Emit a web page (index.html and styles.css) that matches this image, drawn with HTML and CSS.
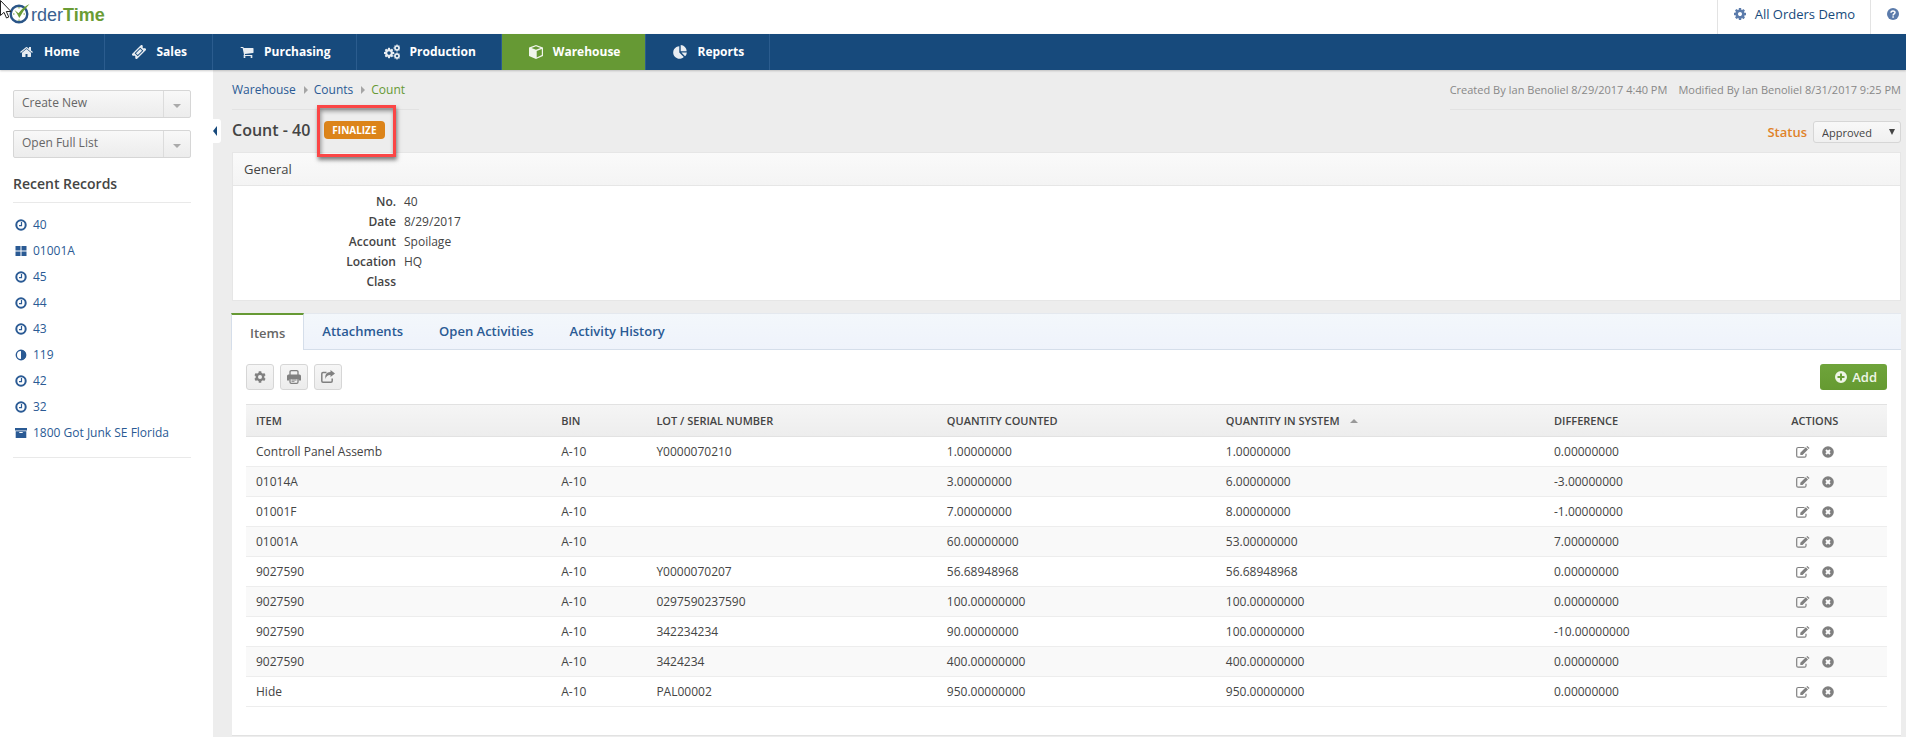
FILE: index.html
```html
<!DOCTYPE html>
<html lang="en">
<head>
  <meta charset="UTF-8">
  <title>OrderTime - Count 40</title>
  <link rel="stylesheet" href="styles.css">
</head>
<body>
  <!-- shared icons -->
  <svg class="sprite" aria-hidden="true">
    <symbol id="i-home" viewBox="0 0 1792 1792"><path d="M1408 992v480q0 26-19 45t-45 19h-384v-384h-256v384h-384q-26 0-45-19t-19-45v-480q0-1 .5-3t.5-3l575-474 575 474q1 2 1 6zm223-69l-62 74q-8 9-21 11h-3q-13 0-21-7l-692-577-692 577q-12 8-24 7-13-2-21-11l-62-74q-8-10-7-23.500t11-21.500l719-599q32-26 76-26t76 26l244 204v-195q0-14 9-23t23-9h192q14 0 23 9t9 23v408l219 182q10 8 11 21.500t-7 23.500z"/></symbol>
    <symbol id="i-ticket" viewBox="0 0 16 16"><g transform="rotate(-45 8 8)"><path fill-rule="evenodd" d="M0 4h16v2.500a1.500 1.500 0 0 0 0 3V12H0V9.500a1.500 1.500 0 0 0 0-3zM3.500 5.500v5h9v-5z"/><path d="M4.500 6.500h7v3h-7z"/></g></symbol>
    <symbol id="i-cart" viewBox="0 0 1792 1792"><path d="M704 1536q0 52-38 90t-90 38-90-38-38-90 38-90 90-38 90 38 38 90zm896 0q0 52-38 90t-90 38-90-38-38-90 38-90 90-38 90 38 38 90zm128-1088v512q0 24-16.500 42.500t-40.500 21.500l-1044 122q13 60 13 70 0 16-24 64h920q26 0 45 19t19 45-19 45-45 19h-1024q-26 0-45-19t-19-45q0-11 8-31.500t16-36 21.500-40 15.500-29.500l-177-823h-204q-26 0-45-19t-19-45 19-45 45-19h256q16 0 28.500 6.500t19.500 15.500 13 24.500 8 26 5.500 29.500 4.500 26h1201q26 0 45 19t19 45z"/></symbol>
    <symbol id="i-gear" viewBox="0 0 1792 1792"><path d="M1152 896q0-106-75-181t-181-75-181 75-75 181 75 181 181 75 181-75 75-181zm512-109v222q0 12-8 23t-20 13l-185 28q-19 54-39 91 35 50 107 138 10 12 10 25t-9 23q-27 37-99 108t-94 71q-12 0-26-9l-138-108q-44 23-91 38-16 136-29 186-7 28-36 28h-222q-14 0-24.500-8.500t-11.500-21.500l-28-184q-49-16-90-37l-141 107q-10 9-25 9-14 0-25-11-126-114-165-168-7-10-7-23 0-12 8-23 15-21 51-66.500t54-70.500q-27-50-41-99l-183-27q-13-2-21-12.500t-8-23.500v-222q0-12 8-23t19-13l186-28q14-46 39-92-40-57-107-138-10-12-10-24 0-10 9-23 26-36 98.500-107.500t94.500-71.500q13 0 26 10l138 107q44-23 91-38 16-136 29-186 7-28 36-28h222q14 0 24.500 8.500t11.500 21.500l28 184q49 16 90 37l142-107q9-9 24-9 13 0 25 10 129 119 165 170 7 8 7 22 0 12-8 23-15 21-51 66.500t-54 70.500q26 50 41 98l183 28q13 2 21 12.500t8 23.500z"/></symbol>
    <symbol id="i-gears" viewBox="0 0 16 16"><use href="#i-gear" x="-1" y="3" width="12" height="12"/><use href="#i-gear" x="9" y="0" width="8" height="8"/><use href="#i-gear" x="9" y="8" width="8" height="8"/></symbol>
    <symbol id="i-cog" viewBox="0 0 12 12"><circle cx="6" cy="6" r="3.200" fill="none" stroke="currentColor" stroke-width="2.400"/><path d="M4.700.3h2.600v2.200H4.700zM4.700 9.500h2.600v2.200H4.700z"/><path d="M4.700.3h2.600v2.200H4.700zM4.700 9.500h2.600v2.200H4.700z" transform="rotate(60 6 6)"/><path d="M4.700.3h2.600v2.200H4.700zM4.700 9.500h2.600v2.200H4.700z" transform="rotate(120 6 6)"/></symbol>
    <symbol id="i-box" viewBox="0 0 14 14"><path fill-rule="evenodd" d="M7 0l7 2.600v8.300L7 14 0 10.900V2.600zM7 1.300L2.500 3 7 4.700 11.500 3zM7.700 6v6.400l5.100-2.300V4z"/></symbol>
    <symbol id="i-pie" viewBox="0 0 14 14"><path d="M6.300 1.200v6.300l4.500 4.600A6.300 6.300 0 1 1 6.300 1.200z"/><path d="M7.700 0A6.200 6.200 0 0 1 13.700 6.200h-6zM8.400 7.500h5.500a6 6 0 0 1-1.900 3.800z"/></symbol>
    <symbol id="i-clock" viewBox="0 0 12 12"><circle cx="6" cy="6" r="4.700" fill="none" stroke="currentColor" stroke-width="2"/><path d="M6.500 3v3.700H4" fill="none" stroke="currentColor" stroke-width="1.200"/></symbol>
    <symbol id="i-grid" viewBox="0 0 12 12"><path d="M.5 1h5v4.500h-5zM6.500 1h5v4.500h-5zM.5 6.500h5V11h-5zM6.500 6.500h5V11h-5z"/></symbol>
    <symbol id="i-half" viewBox="0 0 12 12"><circle cx="6" cy="6" r="4.700" fill="none" stroke="currentColor" stroke-width="1.400"/><path d="M6 1a5 5 0 0 1 0 10z"/></symbol>
    <symbol id="i-archive" viewBox="0 0 12 12"><path fill-rule="evenodd" d="M0 1h12v2.500H0zM.7 4.300h10.600V11H.7zM4.300 5v1h3.400V5z"/></symbol>
    <symbol id="i-help" viewBox="0 0 12 12"><circle cx="6" cy="6" r="6"/><path d="M4 4.700C4 2.300 8 2.300 8 4.600 8 6 6.100 5.900 6.100 7.400M6.100 8.300v1.500" fill="none" stroke="#fff" stroke-width="1.500"/></symbol>
    <symbol id="i-print" viewBox="0 0 14 14"><path d="M3 5V2q0-1.300 1.300-1.300h5.400Q11 .7 11 2v3" fill="#f2f2f2" stroke="currentColor" stroke-width="1.300"/><path d="M1.500 4.500h11Q14 4.500 14 6v4.500h-2.500V9h-9v1.500H0V6q0-1.500 1.500-1.500z"/><path d="M3 8.500h8V12q0 1.300-1.300 1.300H4.300Q3 13.300 3 12z" fill="#f2f2f2" stroke="currentColor" stroke-width="1.300"/><path d="M4.500 9.600h5v1h-5zM4.500 11.300h3v.8h-3z"/></symbol>
    <symbol id="i-share" viewBox="0 0 14 14"><path d="M5.500 2.500H2Q.8 2.500.8 3.700V11q0 1.200 1.200 1.200h8q1.200 0 1.200-1.200V8.500" fill="none" stroke="currentColor" stroke-width="1.500"/><path d="M9.500 0L14 3.500 9.500 7V5Q5.500 4.800 4.500 9 3 2.300 9.500 2z"/></symbol>
    <symbol id="i-plus" viewBox="0 0 12 12"><path fill-rule="evenodd" d="M6 0a6 6 0 1 1 0 12A6 6 0 0 1 6 0zM5 2.500V5H2.500v2H5v2.500h2V7h2.500V5H7V2.500z"/></symbol>
    <symbol id="i-edit" viewBox="0 0 14 12"><path d="M8.500 1.500H2.200Q.7 1.500.7 3v6.700q0 1.500 1.500 1.500h6.300q1.500 0 1.500-1.500V7.800" fill="none" stroke="currentColor" stroke-width="1.200"/><path d="M4.300 9V6.800L9.800 1.300 12 3.500 6.500 9zM10.400.8l.9-.8 2.200 2.100-.8.900z"/></symbol>
    <symbol id="i-remove" viewBox="0 0 12 12"><circle cx="6" cy="6" r="5.800"/><path d="M4 4l4 4M8 4L4 8" stroke="#fff" stroke-width="1.900"/></symbol>
  </svg>

  <header class="topbar">
    <a class="logo" href="#">
      <svg class="logo-mark" viewBox="0 0 22 22"><circle cx="10" cy="12" r="8.300" fill="none" stroke="#2a5587" stroke-width="2.400"/><path d="M10 5v1.500M4 12h1.500M14.500 12H16M10 17.500V19" stroke="#6a9c35" stroke-width="1"/><path d="M5.500 8l4 3.200Q14 5 20.500 2 14.500 8 10.300 16 8.500 12 5.500 8z" fill="#6a9c35"/></svg>
      <span class="logo-order">rder</span><span class="logo-time">Time</span>
    </a>
    <div class="account">
      <a class="account-link" href="#"><svg class="icon icon-lg"><use href="#i-gear"/></svg>All Orders Demo</a>
      <a class="help-link" href="#" aria-label="Help"><svg class="icon"><use href="#i-help"/></svg></a>
    </div>
  </header>
  <svg class="cursor" viewBox="0 0 12 19" aria-hidden="true"><path d="M.5.500v15l3.500-3.200 2.500 5.700 2.300-1-2.500-5.500H11z" fill="#fff" stroke="#222"/></svg>

  <nav class="main-nav">
    <a href="#"><svg class="icon icon-lg"><use href="#i-home"/></svg>Home</a>
    <a href="#"><svg class="icon icon-lg"><use href="#i-ticket"/></svg>Sales</a>
    <a href="#"><svg class="icon icon-lg"><use href="#i-cart"/></svg>Purchasing</a>
    <a href="#"><svg class="icon icon-xl"><use href="#i-gears"/></svg>Production</a>
    <a href="#" class="active"><svg class="icon icon-lg"><use href="#i-box"/></svg>Warehouse</a>
    <a href="#"><svg class="icon icon-lg"><use href="#i-pie"/></svg>Reports</a>
  </nav>

  <div class="layout">
    <aside class="sidebar">
      <button type="button" class="drop-btn"><span>Create New</span><i class="caret"></i></button>
      <button type="button" class="drop-btn"><span>Open Full List</span><i class="caret"></i></button>
      <h2>Recent Records</h2>
      <ul class="recent">
        <li><a href="#"><svg class="icon"><use href="#i-clock"/></svg>40</a></li>
        <li><a href="#"><svg class="icon"><use href="#i-grid"/></svg>01001A</a></li>
        <li><a href="#"><svg class="icon"><use href="#i-clock"/></svg>45</a></li>
        <li><a href="#"><svg class="icon"><use href="#i-clock"/></svg>44</a></li>
        <li><a href="#"><svg class="icon"><use href="#i-clock"/></svg>43</a></li>
        <li><a href="#"><svg class="icon"><use href="#i-half"/></svg>119</a></li>
        <li><a href="#"><svg class="icon"><use href="#i-clock"/></svg>42</a></li>
        <li><a href="#"><svg class="icon"><use href="#i-clock"/></svg>32</a></li>
        <li><a href="#"><svg class="icon"><use href="#i-archive"/></svg>1800 Got Junk SE Florida</a></li>
      </ul>
      <button type="button" class="collapse" aria-label="Collapse sidebar"></button>
    </aside>

    <main class="content">
      <div class="crumb-row">
        <div class="crumbs">
          <a href="#">Warehouse</a><i class="sep"></i><a href="#">Counts</a><i class="sep"></i><span class="current">Count</span>
        </div>
        <div class="audit"><span>Created By Ian Benoliel 8/29/2017 4:40 PM</span><span>Modified By Ian Benoliel 8/31/2017 9:25 PM</span></div>
      </div>

      <div class="title-row">
        <h1>Count - 40</h1>
        <div class="finalize-wrap">
          <button type="button" class="finalize">FINALIZE</button>
          <div class="highlight"></div>
        </div>
        <div class="status">
          <label for="status">Status</label>
          <div class="select-wrap">
            <select id="status"><option>Approved</option></select>
          </div>
        </div>
      </div>

      <section class="card">
        <h3>General</h3>
        <dl class="fields">
          <dt>No.</dt><dd>40</dd>
          <dt>Date</dt><dd>8/29/2017</dd>
          <dt>Account</dt><dd>Spoilage</dd>
          <dt>Location</dt><dd>HQ</dd>
          <dt>Class</dt><dd></dd>
        </dl>
      </section>

      <section class="panel">
        <div class="tabs">
          <a href="#" class="active">Items</a>
          <a href="#">Attachments</a>
          <a href="#">Open Activities</a>
          <a href="#">Activity History</a>
        </div>
        <div class="panel-body">
          <div class="toolbar">
            <button type="button" class="tool" aria-label="Settings"><svg class="icon"><use href="#i-cog"/></svg></button>
            <button type="button" class="tool" aria-label="Print"><svg class="icon icon-lg"><use href="#i-print"/></svg></button>
            <button type="button" class="tool" aria-label="Export"><svg class="icon icon-lg"><use href="#i-share"/></svg></button>
            <button type="button" class="add"><svg class="icon"><use href="#i-plus"/></svg>Add</button>
          </div>
          <table class="items">
            <thead>
              <tr>
                <th class="c-item">ITEM</th>
                <th class="c-bin">BIN</th>
                <th class="c-lot">LOT / SERIAL NUMBER</th>
                <th class="c-counted">QUANTITY COUNTED</th>
                <th class="c-system">QUANTITY IN SYSTEM<i class="sort"></i></th>
                <th class="c-diff">DIFFERENCE</th>
                <th class="c-actions">ACTIONS</th>
              </tr>
            </thead>
            <tbody id="rows"></tbody>
          </table>
        </div>
      </section>
    </main>
  </div>

  <script>
    const items = [
      ["Controll Panel Assemb", "A-10", "Y0000070210", "1.00000000", "1.00000000", "0.00000000"],
      ["01014A", "A-10", "", "3.00000000", "6.00000000", "-3.00000000"],
      ["01001F", "A-10", "", "7.00000000", "8.00000000", "-1.00000000"],
      ["01001A", "A-10", "", "60.00000000", "53.00000000", "7.00000000"],
      ["9027590", "A-10", "Y0000070207", "56.68948968", "56.68948968", "0.00000000"],
      ["9027590", "A-10", "0297590237590", "100.00000000", "100.00000000", "0.00000000"],
      ["9027590", "A-10", "342234234", "90.00000000", "100.00000000", "-10.00000000"],
      ["9027590", "A-10", "3424234", "400.00000000", "400.00000000", "0.00000000"],
      ["Hide", "A-10", "PAL00002", "950.00000000", "950.00000000", "0.00000000"]
    ];

    const actions = `<td class="actions"><div>
      <button type="button" aria-label="Edit"><svg class="icon icon-lg"><use href="#i-edit"/></svg></button>
      <button type="button" aria-label="Delete"><svg class="icon"><use href="#i-remove"/></svg></button>
    </div></td>`;

    document.getElementById("rows").innerHTML = items
      .map(row => "<tr>" + row.map(cell => `<td>${cell}</td>`).join("") + actions + "</tr>")
      .join("");
  </script>
</body>
</html>
```

FILE: styles.css
```css
* {
  box-sizing: border-box;
}
body {
  margin: 0;
  font-family: "Open Sans", sans-serif;
  font-size: 12px;
  line-height: 20px;
  color: #444;
  background: #fff;
  display: flex;
  flex-direction: column;
  min-height: 100vh;
}
a {
  color: #2a5a94;
  text-decoration: none;
}
button, select {
  font-family: inherit;
  cursor: pointer;
}
.sprite {
  position: absolute;
  width: 0;
  height: 0;
}
.icon {
  width: 12px;
  height: 12px;
  fill: currentColor;
  flex: none;
}
.icon-lg {
  width: 14px;
  height: 14px;
}
.icon-xl {
  width: 16px;
  height: 16px;
}

/* top bar */
.topbar {
  display: flex;
  justify-content: space-between;
  height: 34px;
}
.logo {
  display: flex;
  align-items: flex-start;
  padding: 4px 0 0 9px;
  font-family: "Liberation Sans", Arial, sans-serif;
  font-size: 18px;
  line-height: 22px;
}
.logo-mark {
  width: 22px;
  height: 22px;
  margin-top: -2px;
}
.logo-order {
  color: #3a6190;
}
.logo-time {
  color: #6a9c35;
  font-weight: bold;
}
.cursor {
  position: absolute;
  top: 0;
  left: 0;
  width: 12px;
  height: 19px;
}
.account {
  display: flex;
}
.account a {
  display: flex;
  align-items: center;
  border-left: 1px solid #e3e3e3;
  padding-bottom: 6px;
}
.account-link {
  padding: 0 15px;
  gap: 8px;
  font-size: 13px;
  color: #174a7c;
}
.help-link {
  padding: 0 7px 0 16px;
}
.account .icon {
  color: #5b7bab;
}

/* navigation */
.main-nav {
  display: flex;
  height: 36px;
  background: #174a7c;
  box-shadow: 0 1px 2px rgba(0,0,0,0.2);
  position: relative;
}
.main-nav a {
  display: flex;
  align-items: center;
  gap: 10px;
  padding: 0 25px 0 27px;
  border-right: 1px solid #2b5c8e;
  color: #fff;
  font-weight: bold;
}
.main-nav a:first-child {
  padding-left: 20px;
}
.main-nav .active {
  background: #669934;
}
.main-nav .icon {
  opacity: 0.9;
}

/* sidebar */
.layout {
  display: flex;
  flex: 1;
}
.sidebar {
  position: relative;
  width: 213px;
  flex: none;
  padding: 20px 22px 0 13px;
}
.drop-btn {
  display: flex;
  width: 100%;
  height: 28px;
  margin: 0 0 12px;
  padding: 0;
  border: 1px solid #d6d6d6;
  border-radius: 2px;
  background: linear-gradient(#f8f8f8, #ececec);
  color: #666;
  font-size: 12px;
  line-height: 24px;
  text-align: left;
}
.drop-btn span {
  flex: 1;
  padding-left: 8px;
}
.drop-btn .caret {
  width: 27px;
  height: 26px;
  border-left: 1px solid #dcdcdc;
  display: flex;
  align-items: center;
  justify-content: center;
}
.caret::before {
  content: "";
  border: 4px solid transparent;
  border-top-color: #aaa;
  border-bottom: 0;
  margin-top: 4px;
}
.sidebar h2 {
  margin: 16px 0 0;
  padding-bottom: 8px;
  border-bottom: 1px solid #e9e9e9;
  font-size: 14px;
  font-weight: 600;
}
.recent {
  list-style: none;
  margin: 0;
  padding: 9px 0 11px;
  border-bottom: 1px solid #e9e9e9;
}
.recent a {
  display: flex;
  align-items: center;
  gap: 6px;
  height: 26px;
  padding-left: 2px;
}
.collapse {
  position: absolute;
  top: 49px;
  right: -8px;
  display: flex;
  align-items: center;
  width: 10px;
  height: 24px;
  padding: 0 0 0 2px;
  border: 0;
  border-radius: 0 3px 3px 0;
  background: #fff;
}
.collapse::before {
  content: "";
  border: 5px solid transparent;
  border-right: 4px solid #174a7c;
  border-left: 0;
}

/* content */
.content {
  flex: 1;
  padding: 10px 5px 0 19px;
  background: #ededed;
}
.crumb-row {
  display: flex;
  justify-content: space-between;
}
.crumbs, .audit {
  display: flex;
  align-items: center;
  height: 30px;
  padding-bottom: 10px;
  border-bottom: 1px solid #e2e2e2;
}
.crumbs {
  padding-right: 14px;
}
.sep {
  margin: 0 6px 0 8px;
  border: 4px solid transparent;
  border-left-color: #a5a5a5;
  border-right: 0;
}
.current {
  color: #669934;
}
.audit {
  gap: 11px;
  font-size: 11px;
  color: #888;
}
.title-row {
  display: flex;
  align-items: center;
  height: 42px;
  padding-bottom: 2px;
}
h1 {
  margin: 0 14px 0 0;
  font-size: 16px;
  font-weight: 600;
}
.finalize-wrap {
  position: relative;
  display: flex;
}
.finalize {
  height: 18px;
  padding: 0 8px;
  border: 0;
  border-radius: 4px;
  background: #dc841a;
  color: #fff;
  font-size: 10px;
  font-weight: bold;
  line-height: 18px;
}
.highlight {
  position: absolute;
  top: -16px;
  right: -11px;
  bottom: -18px;
  left: -7px;
  border: 3px solid #fb4646;
  box-shadow: 1px 3px 4px rgba(0,0,0,0.5), inset 1px 3px 4px rgba(0,0,0,0.4);
  pointer-events: none;
}
.status {
  display: flex;
  align-items: center;
  gap: 6px;
  margin-left: auto;
  padding-top: 4px;
}
.status label {
  color: #e0832a;
  font-size: 13px;
  font-weight: 600;
}
.select-wrap {
  position: relative;
}
.select-wrap::after {
  content: "";
  position: absolute;
  top: 8px;
  right: 6px;
  border: 3px solid transparent;
  border-top: 6px solid #444;
  border-bottom: 0;
  pointer-events: none;
}
.status select {
  display: block;
  appearance: none;
  width: 88px;
  height: 22px;
  padding: 0 8px;
  border: 1px solid #d6d6d6;
  border-radius: 3px;
  background: linear-gradient(#f8f8f8, #f0f0f0);
  color: #444;
  font-size: 11px;
}

/* general card */
.card {
  background: #fff;
  border: 1px solid #e6e6e6;
}
.card h3 {
  margin: 0;
  padding: 0 11px;
  height: 33px;
  border-bottom: 1px solid #e6e6e6;
  background: linear-gradient(#fafafa, #f4f4f4);
  font-size: 13px;
  font-weight: 400;
  line-height: 32px;
}
.fields {
  display: grid;
  grid-template-columns: 163px 1fr;
  grid-auto-rows: 20px;
  column-gap: 8px;
  margin: 0;
  padding: 6px 0 8px;
}
.fields dt {
  text-align: right;
  font-weight: 600;
}
.fields dd {
  margin: 0;
}

/* tabs and item list */
.panel {
  margin-top: 12px;
  background: #fff;
  border-bottom: 1px solid #e2e2e2;
}
.tabs {
  display: flex;
  height: 37px;
  border-top: 1px solid #e4e8ee;
  border-bottom: 1px solid #d5deea;
  background: linear-gradient(#f3f7fb, #eff3fb);
}
.tabs a {
  padding: 0 18px;
  font-size: 13px;
  font-weight: 600;
  line-height: 35px;
}
.tabs .active {
  margin: -1px 0 -1px -1px;
  border-top: 2px solid #669934;
  border-left: 1px solid #d5deea;
  border-right: 1px solid #d5deea;
  background: #fff;
  color: #666;
  line-height: 36px;
}
.panel-body {
  padding: 14px;
  padding-bottom: 28px;
}
.toolbar {
  display: flex;
  gap: 6px;
  margin-bottom: 14px;
}
.tool {
  display: flex;
  align-items: center;
  justify-content: center;
  width: 28px;
  height: 26px;
  padding: 0;
  border: 1px solid #d6d6d6;
  border-radius: 3px;
  background: linear-gradient(#f6f6f6, #ececec);
  color: #808080;
}
.add {
  display: flex;
  align-items: center;
  gap: 5px;
  height: 26px;
  margin-left: auto;
  padding: 0 10px 0 15px;
  border: 0;
  border-radius: 3px;
  background: linear-gradient(#6fa43b, #659a31);
  color: #eef5e6;
  font-size: 13px;
  font-weight: 600;
}
.items {
  width: 100%;
  table-layout: fixed;
  border-collapse: separate;
  border-spacing: 0;
}
.items th {
  height: 33px;
  padding: 0 10px;
  border-top: 1px solid #e2e2e2;
  border-bottom: 1px solid #e2e2e2;
  background: linear-gradient(#f5f5f5, #ededed);
  font-size: 11px;
  font-weight: 600;
  text-align: left;
}
.items td {
  height: 30px;
  padding: 0 10px;
  border-bottom: 1px solid #ededed;
}
.items tbody tr:nth-child(even) {
  background: #f9f9f9;
}
.c-item { width: 18.6%; }
.c-bin { width: 5.8%; }
.c-lot { width: 17.7%; }
.c-counted { width: 17%; }
.c-system { width: 20%; }
.c-diff { width: 12.1%; }
.items .c-actions {
  text-align: center;
}
.sort {
  display: inline-block;
  margin: 0 0 2px 10px;
  border: 4px solid transparent;
  border-bottom-color: #999;
  border-top: 0;
}
.actions div {
  display: flex;
  justify-content: center;
  gap: 12px;
}
.actions button {
  display: flex;
  align-items: center;
  padding: 0;
  border: 0;
  background: none;
  color: #808080;
}
```
